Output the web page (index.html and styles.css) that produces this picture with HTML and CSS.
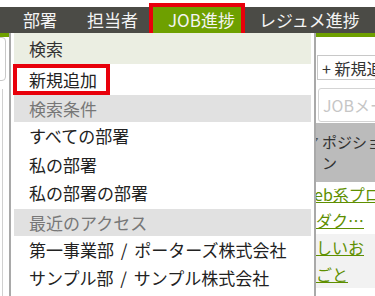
FILE: index.html
```html
<!DOCTYPE html>
<html lang="ja">
<head>
  <meta charset="UTF-8">
  <meta name="viewport" content="width=device-width, initial-scale=1.0">
  <title>JOB進捗</title>
  <link rel="stylesheet" href="styles.css">
</head>
<body>
  <div class="page">
    <nav class="topbar">
      <a class="nav-item">部署</a>
      <a class="nav-item">担当者</a>
      <a class="nav-item active">JOB進捗</a>
      <a class="nav-item">レジュメ進捗</a>
    </nav>
    <div class="stripe"></div>

    <div class="content">
      <aside class="side">
        <div class="side-box"></div>
        <div class="side-line"></div>
      </aside>
      <main class="main">
        <div class="toolbar">
          <button class="btn-add">+ 新規追加</button>
        </div>
        <div class="search-row">
          <input class="search" type="text" placeholder="JOBメールアドレス">
        </div>
        <div class="list">
          <div class="list-head"><span class="head-mark">ア</span><span class="head-text">ポジション</span></div>
          <div class="list-row first"><a class="job-link">Web系プロジェクト</a></div>
          <div class="list-row"><a class="job-link">ロダク…</a></div>
          <div class="list-row alt"><a class="job-link">新しいお</a></div>
          <div class="list-row alt"><a class="job-link">しごと</a></div>
        </div>
      </main>
    </div>

    <div class="dropdown">
      <div class="dd-head first">検索</div>
      <div class="dd-item tall"><a class="dd-new">新規追加</a></div>
      <div class="dd-head">検索条件</div>
      <div class="dd-item first-item">すべての部署</div>
      <div class="dd-item">私の部署</div>
      <div class="dd-item">私の部署の部署</div>
      <div class="dd-head spaced">最近のアクセス</div>
      <div class="dd-item">第一事業部 / ポーターズ株式会社</div>
      <div class="dd-item">サンプル部 / サンプル株式会社</div>
    </div>
  </div>
</body>
</html>
```

FILE: styles.css
```css
body {
  margin: 0;
  padding: 0;
  font-family: "Noto Sans CJK JP", "Noto Sans", sans-serif;
  background: #fff;
  color: #222;
  overflow: hidden;
}

.page {
  position: relative;
  width: 375px;
  height: 296px;
  padding-top: 7px;
  box-sizing: border-box;
  overflow: hidden;
}

/* top navigation */
.topbar {
  display: flex;
  height: 26px;
  padding-left: 8px;
  background: #4b4b46;
}

.nav-item {
  padding: 0 15px;
  line-height: 26px;
  font-size: 17px;
  color: #f4f4f4;
  white-space: nowrap;
}

.nav-item.active {
  padding: 0 6px 0 15px;
  margin-right: 3px;
  background: #6ea000;
  outline: 4px solid #e8000b;
}

.stripe {
  height: 4px;
  background: #6ea000;
}

/* page behind the menu */
.content {
  display: flex;
}

.side {
  width: 300px;
  flex-shrink: 0;
}

.side-box {
  width: 14px;
  height: 42px;
  margin-left: -10px;
  border: 1px solid #c8c8c8;
  border-radius: 4px;
}

.side-line {
  height: 220px;
  margin-top: 8px;
  margin-left: 2px;
  border-left: 1px solid #d0d0d0;
}

.main {
  width: 100px;
  flex-shrink: 0;
  border-left: 2px solid #a9a9a9;
  margin-left: 14px;
  margin-right: -50px;
}

.toolbar {
  padding: 18px 0 0 1px;
}

.btn-add {
  height: 25px;
  padding: 0 4px;
  border: 1px solid #c8c8c8;
  background: #fff;
  font-family: inherit;
  font-size: 16px;
  line-height: 22px;
  color: #333;
  white-space: nowrap;
}

.search-row {
  padding: 8px 0 0 2px;
}

.search {
  width: 100px;
  height: 34px;
  box-sizing: border-box;
  padding: 0 4px;
  border: 1px solid #d4d4d4;
  border-radius: 3px;
  font-family: inherit;
  font-size: 16px;
  color: #333;
}

.search::placeholder {
  color: #c6c6c6;
}

.list {
  margin-top: 1px;
  margin-left: -16px;
}

.list-head {
  display: flex;
  height: 59px;
  padding-top: 8px;
  box-sizing: border-box;
  background: #bbbbbb;
  color: #333;
  font-size: 15px;
  line-height: 21px;
}

.head-mark {
  width: 12px;
  font-size: 13px;
  margin-left: 6px;
  color: #555;
}

.head-text {
  width: 64px;
  margin-left: 4px;
}

.list-row {
  height: 27px;
  line-height: 27px;
  font-size: 16px;
  white-space: nowrap;
}

.list-row.first {
  height: 25px;
  line-height: 25px;
}

.list-row.alt {
  background: #f2f2f2;
}

.job-link {
  color: #5e8f00;
  text-decoration: underline;
}

/* dropdown menu */
.dropdown {
  position: absolute;
  top: 33px;
  left: 9px;
  width: 297px;
  height: 270px;
  padding: 0 3px;
  background: #fff;
  border-left: 2px solid #a9a9a9;
  border-right: 2px solid #a9a9a9;
  font-size: 17px;
}

.dd-head {
  height: 27px;
  line-height: 27px;
  padding-left: 15px;
  background: #e1e1e1;
  color: #777;
}

.dd-head.first {
  height: 31px;
  line-height: 31px;
  background: #ebeee2;
  color: #333;
}

.dd-head.spaced {
  margin-top: 2px;
}

.dd-item {
  height: 28px;
  line-height: 28px;
  padding-left: 15px;
  color: #222;
  word-spacing: 3px;
}

.dd-item.tall {
  height: 31px;
  line-height: 31px;
}

.dd-item.first-item {
  height: 29px;
}

.dd-new {
  display: inline-block;
  line-height: 23px;
  margin-left: -12px;
  padding: 0 9px 0 12px;
  outline: 4px solid #e8000b;
  outline-offset: 0;
}
```
